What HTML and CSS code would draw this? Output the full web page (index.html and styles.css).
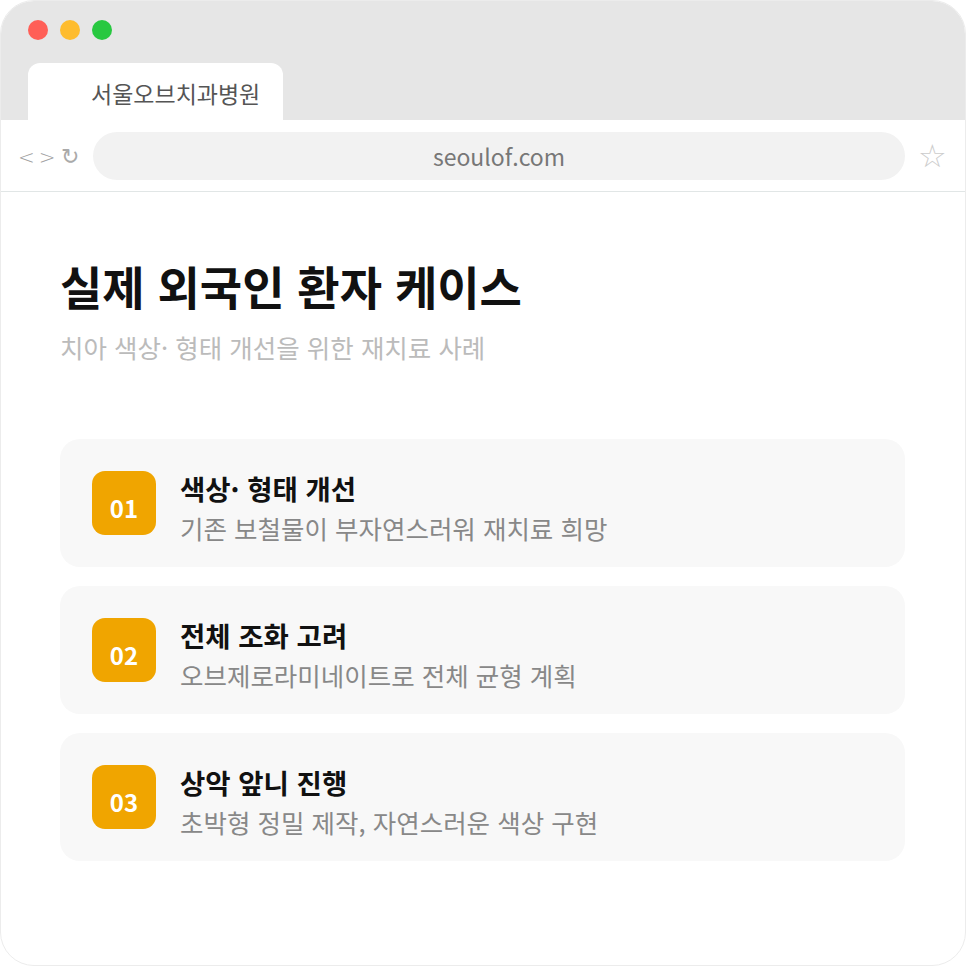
FILE: index.html
```html
<!DOCTYPE html>
<html lang="ko">
<head>
    <meta charset="UTF-8">
    <meta name="viewport" content="width=device-width, initial-scale=1.0">
    <title>서울오브치과병원</title>
    <link rel="stylesheet" href="styles.css">
</head>
<body>
    <div class="window">
        <div class="titlebar">
            <div class="lights">
                <span class="light red"></span>
                <span class="light yellow"></span>
                <span class="light green"></span>
            </div>
            <div class="tab">서울오브치과병원</div>
        </div>
        <div class="toolbar">
            <div class="nav"><span>&lt;</span><span>&gt;</span><span class="reload">↻</span></div>
            <div class="url">seoulof.com</div>
            <div class="star">☆</div>
        </div>
        <div class="content">
            <h1>실제 외국인 환자 케이스</h1>
            <p class="subtitle">치아 색상· 형태 개선을 위한 재치료 사례</p>
            <div class="cards">
                <div class="card">
                    <div class="badge">01</div>
                    <div class="card-text">
                        <div class="card-title">색상· 형태 개선</div>
                        <div class="card-desc">기존 보철물이 부자연스러워 재치료 희망</div>
                    </div>
                </div>
                <div class="card">
                    <div class="badge">02</div>
                    <div class="card-text">
                        <div class="card-title">전체 조화 고려</div>
                        <div class="card-desc">오브제로라미네이트로 전체 균형 계획</div>
                    </div>
                </div>
                <div class="card">
                    <div class="badge">03</div>
                    <div class="card-text">
                        <div class="card-title">상악 앞니 진행</div>
                        <div class="card-desc">초박형 정밀 제작, 자연스러운 색상 구현</div>
                    </div>
                </div>
            </div>
        </div>
    </div>
</body>
</html>
```

FILE: styles.css
```css
body {
    margin: 0;
    background: #fff;
    font-family: "Noto Sans CJK KR", "Noto Sans", sans-serif;
}

.window {
    width: 964px;
    height: 964px;
    border: 1px solid #ececec;
    border-radius: 34px;
    overflow: hidden;
    background: #fff;
}

.titlebar {
    background: #e6e6e6;
    height: 119px;
    display: flex;
    flex-direction: column;
}

.lights {
    display: flex;
    gap: 12px;
    padding: 19px 0 0 27px;
}

.light {
    width: 20px;
    height: 20px;
    border-radius: 50%;
}

.red { background: #ff5f57; }
.yellow { background: #febc2e; }
.green { background: #28c840; }

.tab {
    margin: 23px 0 0 27px;
    width: 255px;
    height: 57px;
    box-sizing: border-box;
    background: #fff;
    border-radius: 12px 12px 0 0;
    padding: 15px 0 0 63px;
    font-size: 23px;
    line-height: 30px;
    color: #555;
}

.toolbar {
    height: 71px;
    border-bottom: 1px solid #e1e6e6;
    display: flex;
    align-items: center;
    padding: 0 0 0 17px;
}

.nav {
    display: flex;
    align-items: center;
    gap: 4px;
    color: #a0a0a0;
    font-family: "DejaVu Sans", sans-serif;
    font-weight: 200;
    font-size: 20px;
    width: 75px;
    padding-top: 2px;
}

.reload {
    font-size: 22px;
    margin-left: 1px;
    color: #aaa;
}

.url {
    width: 812px;
    height: 48px;
    border-radius: 24px;
    background: #f2f2f2;
    text-align: center;
    line-height: 48px;
    font-size: 23px;
    color: #777;
}

.star {
    margin-left: 13px;
    font-family: "DejaVu Sans", sans-serif;
    font-size: 32px;
    color: #ccc;
}

.content {
    padding: 60px 60px 0 59px;
}

h1 {
    margin: 0;
    font-size: 46px;
    font-weight: 700;
    line-height: 66px;
    color: #111;
}

.subtitle {
    margin: 11px 0 0;
    font-size: 25.5px;
    line-height: 36px;
    color: #bbb;
}

.cards {
    margin-top: 74px;
    display: flex;
    flex-direction: column;
    gap: 19px;
}

.card {
    height: 128px;
    background: #f8f8f8;
    border-radius: 20px;
    display: flex;
    align-items: center;
    padding: 0 32px;
}

.badge {
    width: 64px;
    height: 64px;
    border-radius: 13px;
    background: #f0a500;
    color: #fff;
    font-weight: 700;
    font-size: 24px;
    display: flex;
    align-items: center;
    justify-content: center;
    padding-top: 8px;
    box-sizing: border-box;
}

.card-text {
    margin-left: 24px;
    padding-top: 8px;
}

.card-title {
    font-size: 27.5px;
    font-weight: 700;
    line-height: 36px;
    color: #111;
}

.card-desc {
    margin-top: 5px;
    font-size: 25.5px;
    line-height: 34px;
    color: #888;
}
```
